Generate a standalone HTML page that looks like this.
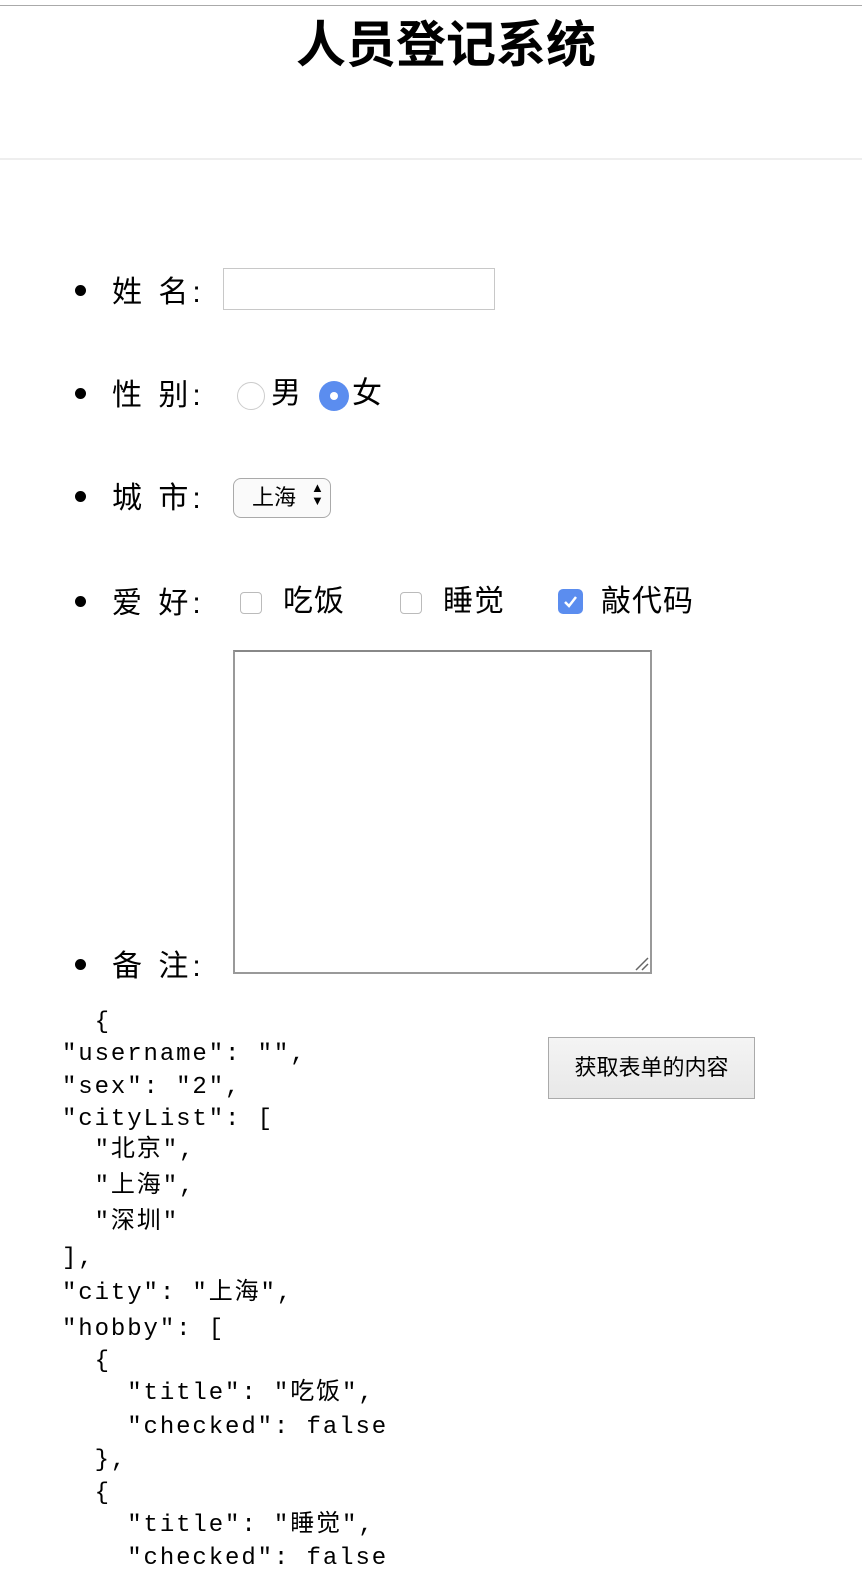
<!DOCTYPE html>
<html><head><meta charset="utf-8">
<style>
*{margin:0;padding:0;box-sizing:border-box}
body{width:862px;height:1582px;background:#fff;position:relative;overflow:hidden;font-family:"Liberation Sans","Noto Sans CJK SC",sans-serif;color:#000}
.a{position:absolute;white-space:pre}
.lbl{font-size:30px;line-height:36px;letter-spacing:4px}
.dot{position:absolute;width:11px;height:11px;border-radius:50%;background:#000;left:75px}
.mono{font-family:"Liberation Mono","Noto Sans CJK SC",monospace;font-size:24px;letter-spacing:1.9px;line-height:30px}
.cb{position:absolute;width:22px;height:22px;border:1px solid #bbb;border-radius:4px;background:#fff}
</style></head><body>
<div class="a" style="left:0;top:5px;width:862px;height:1px;background:#aaa"></div>
<div class="a" style="left:15px;top:17px;width:862px;text-align:center;font-size:50px;font-weight:bold;line-height:56px">人员登记系统</div>
<div class="a" style="left:0;top:158px;width:862px;height:2px;background:#eee"></div>

<div class="dot" style="top:285px"></div>
<div class="a lbl" style="left:112px;top:275px">姓 名:</div>
<div class="a" style="left:223px;top:268px;width:272px;height:42px;border:1px solid #c8c8c8"></div>

<div class="dot" style="top:388px"></div>
<div class="a lbl" style="left:112px;top:378px">性 别:</div>
<div class="a" style="left:237px;top:382px;width:28px;height:28px;border-radius:50%;border:1px solid #ccc;background:#fff"></div>
<div class="a lbl" style="left:271px;top:376px">男</div>
<div class="a" style="left:319px;top:381px;width:30px;height:30px;border-radius:50%;background:#5b8def"></div>
<div class="a" style="left:330px;top:392px;width:8px;height:8px;border-radius:50%;background:#fff"></div>
<div class="a lbl" style="left:352px;top:376px">女</div>

<div class="dot" style="top:491px"></div>
<div class="a lbl" style="left:112px;top:481px">城 市:</div>
<div class="a" style="left:233px;top:478px;width:98px;height:40px;border:1px solid #aaa;border-radius:8px;background:#fafafa;font-size:22px;line-height:38px;padding-left:18px">上海<span style="position:absolute;left:77px;top:-1px;font-size:13px;line-height:19px">▲</span><span style="position:absolute;left:77px;top:12px;font-size:13px;line-height:19px">▼</span></div>

<div class="dot" style="top:596px"></div>
<div class="a lbl" style="left:112px;top:586px">爱 好:</div>
<div class="cb" style="left:240px;top:592px"></div>
<div class="a lbl" style="left:283px;top:584px;letter-spacing:1px">吃饭</div>
<div class="cb" style="left:400px;top:592px"></div>
<div class="a lbl" style="left:443px;top:584px;letter-spacing:1px">睡觉</div>
<div class="a" style="left:558px;top:589px;width:25px;height:25px;border-radius:5px;background:#5b8def"><svg width="25" height="25"><path d="M7 13 L11 17 L18 8" stroke="#fff" stroke-width="2.5" fill="none"/></svg></div>
<div class="a lbl" style="left:601px;top:584px;letter-spacing:1px">敲代码</div>

<div class="a" style="left:233px;top:650px;width:419px;height:324px;border:2px solid #999;border-top-color:#888"><svg style="position:absolute;right:1px;bottom:1px" width="16" height="16"><path d="M3 15 L15 3 M9 15 L15 9" stroke="#666" stroke-width="1.5"/></svg></div>
<div class="dot" style="top:959px"></div>
<div class="a lbl" style="left:112px;top:949px">备 注:</div>

<div class="a" style="left:548px;top:1037px;width:207px;height:62px;border:1px solid #aaa;background:linear-gradient(#f4f4f4,#e8e8e8);font-size:22px;line-height:60px;text-align:center">获取表单的内容</div>

<div class="a mono" style="left:62px;top:1008px">  {</div>
<div class="a mono" style="left:62px;top:1040px">"username": "",</div>
<div class="a mono" style="left:62px;top:1073px">"sex": "2",</div>
<div class="a mono" style="left:62px;top:1105px">"cityList": [</div>
<div class="a mono" style="left:62px;top:1136px">  "北京",</div>
<div class="a mono" style="left:62px;top:1172px">  "上海",</div>
<div class="a mono" style="left:62px;top:1208px">  "深圳"</div>
<div class="a mono" style="left:62px;top:1244px">],</div>
<div class="a mono" style="left:62px;top:1279px">"city": "上海",</div>
<div class="a mono" style="left:62px;top:1315px">"hobby": [</div>
<div class="a mono" style="left:62px;top:1347px">  {</div>
<div class="a mono" style="left:62px;top:1379px">    "title": "吃饭",</div>
<div class="a mono" style="left:62px;top:1413px">    "checked": false</div>
<div class="a mono" style="left:62px;top:1446px">  },</div>
<div class="a mono" style="left:62px;top:1479px">  {</div>
<div class="a mono" style="left:62px;top:1511px">    "title": "睡觉",</div>
<div class="a mono" style="left:62px;top:1544px">    "checked": false</div>
</body></html>
